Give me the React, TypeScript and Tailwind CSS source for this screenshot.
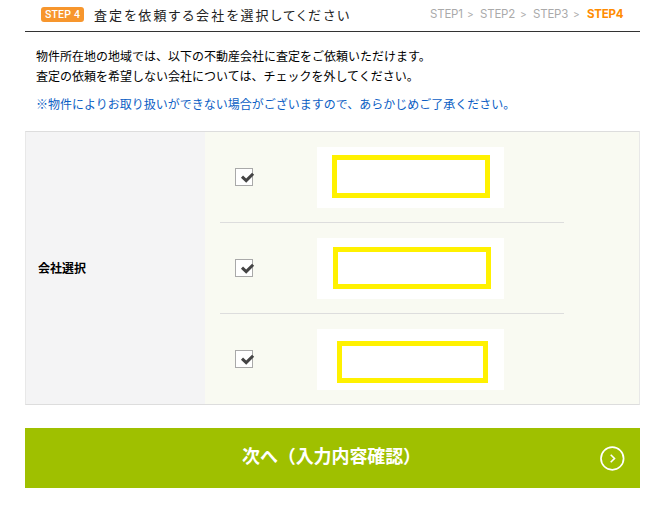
import clsx from 'clsx';

const steps = [
  { label: 'STEP1', width: 'w-[50px]', gap: 'w-[37px]' },
  { label: 'STEP2', width: 'w-[53px]', gap: 'w-[40px]' },
  { label: 'STEP3', width: 'w-[53px]', gap: 'w-[40px]' },
];

const companies = [
  { id: 1, frame: 'ml-[15px] mt-2 w-[158px] h-[43px]' },
  { id: 2, frame: 'ml-4 mt-[9px] w-[158px] h-[42px]' },
  { id: 3, frame: 'ml-5 mt-3 w-[151px] h-[42px]' },
];

const CheckBox = () => {
  return (
    <div className="ml-[15px] mt-9 w-[18px] h-[18px] shrink-0 border border-[#a9a9a9] bg-white">
      <svg className="block overflow-visible" width="16" height="16" viewBox="0 0 16 16">
        <path d="M6 7.6l4.2 4 6.9-6.9" fill="none" stroke="#444" strokeWidth="3" />
      </svg>
    </div>
  );
};

const Header = () => {
  return (
    <header className="flex h-8 border-b border-[#333] pl-4">
      <span className="mt-[7px] flex h-[15px] w-[43px] items-center justify-center rounded-[3px] bg-[#f7962d] text-[10.5px] font-medium tracking-[0.2px] text-white font-[Roboto,sans-serif]">
        STEP 4
      </span>
      <h1 className="ml-[10px] mt-[5px] w-[336px] whitespace-nowrap text-[13px] leading-5 tracking-[2.1px] text-[#222] [font-feature-settings:'palt']">
        査定を依頼する会社を選択してください
      </h1>
      <div className="mt-[4px] flex whitespace-nowrap text-[11.5px] leading-5 text-[#aaa] font-[Inter,sans-serif]">
        {steps.map((step) => (
          <span key={step.label} className={clsx('flex', step.width)}>
            <span className={clsx('tracking-[-0.2px]', step.gap)}>{step.label}</span>
            <span className="text-[10px]">&gt;</span>
          </span>
        ))}
        <span className="ml-px font-bold tracking-[-0.2px] text-[#ff8c00]">STEP4</span>
      </div>
    </header>
  );
};

const App = () => {
  return (
    <div className="h-[513px] w-[665px] overflow-hidden bg-white pl-[25px] text-black font-['Noto_Sans_CJK_JP',sans-serif]">
      <div className="w-[615px]">
        <Header />
        <div className="h-[99px] whitespace-nowrap pl-[11px] pt-[14px] text-[12px] leading-5">
          <p>物件所在地の地域では、以下の不動産会社に査定をご依頼いただけます。</p>
          <p>査定の依頼を希望しない会社については、チェックを外してください。</p>
          <p className="mt-2 text-[#0b5ec4]">
            ※物件によりお取り扱いができない場合がございますので、あらかじめご了承ください。
          </p>
        </div>

        <div className="flex h-[274px] border border-[#ddd] border-l-[#e8e8e8] border-r-[#e8e8e8]">
          <div className="flex w-[179px] items-center bg-[#f4f4f5] pb-px pl-3 text-[12px] font-bold">
            会社選択
          </div>
          <div className="flex-1 bg-[#f9faf2] pl-[15px]">
            {companies.map((company) => (
              <div
                key={company.id}
                className="flex h-[91px] w-[344px] items-start border-b border-[#ddd] last:h-[90px] last:border-b-0"
              >
                <CheckBox />
                <div className="ml-16 mt-[15px] h-[61px] w-[187px] bg-white">
                  <div className="flex">
                    <div className={clsx('border-5 border-[#fff100]', company.frame)} />
                  </div>
                </div>
              </div>
            ))}
          </div>
        </div>

        <button className="mt-[23px] flex h-[60px] w-full items-center bg-[#9fc000] text-[18px] font-bold text-white">
          <span className="ml-[217px] w-[358px] whitespace-nowrap pb-[5px] text-left tracking-[-0.1px]">
            次へ（入力内容確認）
          </span>
          <svg width="25" height="25" viewBox="0 0 25 25" fill="none" stroke="#fff">
            <circle cx="12.3" cy="12.5" r="11.3" strokeWidth="1.7" />
            <path d="M10.7 8.8l3.8 3.7-3.8 3.7" strokeWidth="1.6" />
          </svg>
        </button>
      </div>
    </div>
  );
};

export default App;
